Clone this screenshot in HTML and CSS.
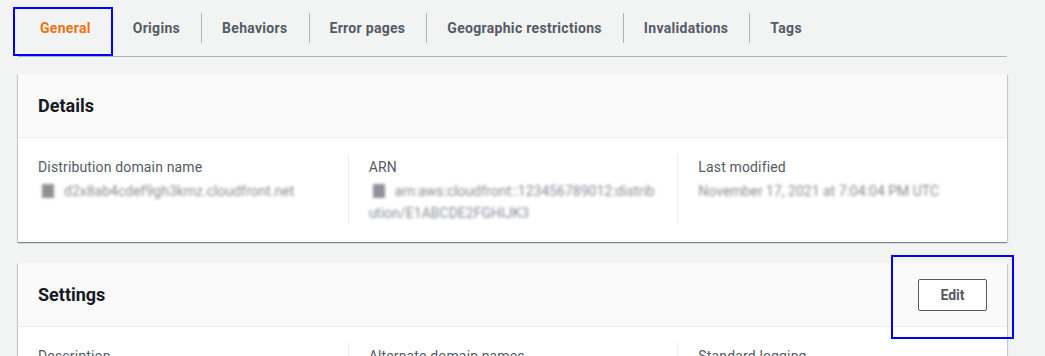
FILE: index.html
```html
<!DOCTYPE html>
<html lang="en">
<head>
<meta charset="utf-8">
<title>Distribution</title>
<link rel="stylesheet" href="styles.css">
</head>
<body>
<div class="page">
  <nav class="tabs">
    <a class="tab active">General</a>
    <a class="tab no-div">Origins</a>
    <a class="tab">Behaviors</a>
    <a class="tab">Error pages</a>
    <a class="tab">Geographic restrictions</a>
    <a class="tab">Invalidations</a>
    <a class="tab">Tags</a>
  </nav>

  <section class="card">
    <header class="card-head">
      <h2>Details</h2>
    </header>
    <div class="cols">
      <div class="col">
        <div class="label">Distribution domain name</div>
        <div class="value"><span class="copy"></span>d2x8ab4cdef9gh3kmz.cloudfront.net</div>
      </div>
      <div class="col">
        <div class="label">ARN</div>
        <div class="value wrap"><span class="copy"></span>arn:aws:cloudfront::123456789012:distribution/E1ABCDE2FGHIJK3</div>
      </div>
      <div class="col">
        <div class="label">Last modified</div>
        <div class="value">November 17, 2021 at 7:04:04 PM UTC</div>
      </div>
    </div>
  </section>

  <section class="card">
    <header class="card-head">
      <h2>Settings</h2>
      <button class="btn">Edit</button>
    </header>
    <div class="cols">
      <div class="col"><div class="label">Description</div></div>
      <div class="col"><div class="label">Alternate domain names</div></div>
      <div class="col"><div class="label">Standard logging</div></div>
    </div>
  </section>

  <div class="mark mark-tab"></div>
  <div class="mark mark-edit"></div>
</div>
</body>
</html>
```

FILE: styles.css
```css
html, body {
  margin: 0;
  padding: 0;
  background: #f2f3f3;
  font-family: Roboto, "Noto Sans", Arial, sans-serif;
  color: #16191f;
  overflow: hidden;
}

.page {
  position: relative;
  padding: 0 38px 0 18px;
  height: 356px;
}

.tabs {
  display: flex;
  height: 56px;
  border-bottom: 1px solid #aab7b8;
}

.tab {
  position: relative;
  display: flex;
  align-items: center;
  padding: 0 21px;
  font-size: 14px;
  font-weight: 700;
  letter-spacing: 0.3px;
  color: #545b64;
  white-space: nowrap;
}

.tab:first-child {
  padding-left: 22px;
}

.tab.active {
  color: #ec7211;
}

.tab + .tab::before {
  content: "";
  position: absolute;
  left: 0;
  top: 13px;
  height: 30px;
  width: 1px;
  background: #aab7b8;
}

.tab.no-div::before {
  display: none;
}

.card {
  margin-top: 17px;
  background: #fff;
  box-shadow: 0 1px 1px 0 rgba(0, 28, 36, 0.3), 1px 1px 1px 0 rgba(0, 28, 36, 0.15), -1px 1px 1px 0 rgba(0, 28, 36, 0.15);
}

.card + .card {
  margin-top: 21px;
}

.card-head {
  display: flex;
  align-items: center;
  justify-content: space-between;
  height: 63px;
  padding: 0 20px;
  background: #fafafa;
  border-bottom: 1px solid #eaeded;
}

.card-head h2 {
  margin: 0;
  font-size: 18px;
  font-weight: 700;
  line-height: 22px;
  color: #16191f;
}

.btn {
  width: 69px;
  height: 32px;
  background: #fff;
  border: 1px solid #545b64;
  border-radius: 2px;
  font-family: inherit;
  font-size: 14px;
  font-weight: 700;
  color: #545b64;
  padding: 0;
}

.cols {
  display: grid;
  grid-template-columns: repeat(3, minmax(0, 1fr));
  padding: 16px 0 18px;
}

.col {
  padding: 0 20px;
  min-height: 68px;
}

.col + .col {
  border-left: 1px solid #eaeded;
}

.label {
  font-size: 14px;
  line-height: 20px;
  letter-spacing: 0.15px;
  color: #545b64;
  margin-top: 3px;
}

.value {
  font-size: 14px;
  line-height: 22px;
  color: #868b92;
  filter: blur(1.4px);
  white-space: nowrap;
  margin-top: 3px;
}

.value.wrap {
  white-space: normal;
  word-break: break-all;
}

.copy {
  display: inline-block;
  vertical-align: -2px;
  width: 12px;
  height: 14px;
  margin: 0 10px 0 4px;
  background: #8d9096;
}

.mark {
  position: absolute;
  border: 2px solid #0000ff;
  box-sizing: border-box;
  pointer-events: none;
}

.mark-tab {
  left: 13px;
  top: 7px;
  width: 100px;
  height: 49px;
}

.mark-edit {
  left: 891px;
  top: 255px;
  width: 123px;
  height: 84px;
}
```
